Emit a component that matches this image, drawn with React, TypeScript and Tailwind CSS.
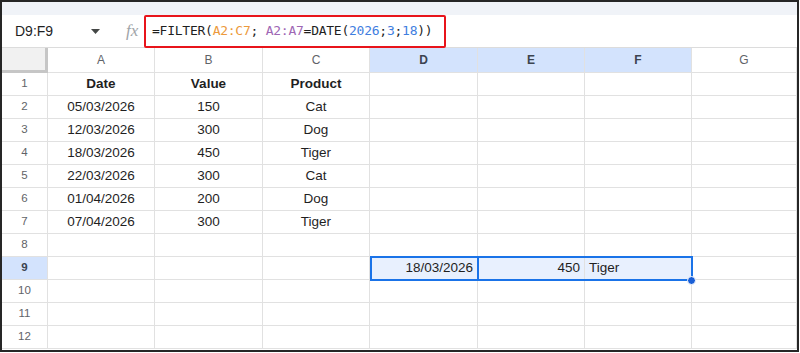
const cols = ["A", "B", "C", "D", "E", "F", "G"];
const colWidths = ["w-[107px]", "w-[108px]", "w-[107px]", "w-[108px]", "w-[107px]", "w-[107px]", "flex-1"];

const data: string[][] = [
  ["Date", "Value", "Product"],
  ["05/03/2026", "150", "Cat"],
  ["12/03/2026", "300", "Dog"],
  ["18/03/2026", "450", "Tiger"],
  ["22/03/2026", "300", "Cat"],
  ["01/04/2026", "200", "Dog"],
  ["07/04/2026", "300", "Tiger"],
];

const Formula = () => (
  <span className="font-['DejaVu_Sans_Mono',monospace] text-[13px] tracking-[-0.25px] text-[#1f1f1f]">
    =FILTER(<span className="text-[#ec9a3c]">A2:C7</span>; <span className="text-[#9e66b4]">A2:A7</span>=DATE(
    <span className="text-[#3f7ee0]">2026</span>;<span className="text-[#3f7ee0]">3</span>;
    <span className="text-[#3f7ee0]">18</span>))
  </span>
);

export default function App() {
  return (
    <div className="w-[800px] h-[353px] bg-white font-['Liberation_Sans',Arial,sans-serif]">
      <div className="w-[799px] h-[352px] border-2 border-[#262626] flex flex-col overflow-hidden">
        {/* toolbar remnant */}
        <div className="h-[13px] bg-[#f0f3f8]" />

        {/* formula bar */}
        <div className="h-[33px] flex items-center border-b border-[#dcdcdc]">
          <div className="w-[110px] flex items-center pl-[13px] pr-[12px] justify-between">
            <span className="text-[14px] text-[#1f1f1f]">D9:F9</span>
            <svg width="9" height="5" viewBox="0 0 9 5">
              <path d="M0 0h9L4.5 5z" fill="#444746" />
            </svg>
          </div>
          <span className="w-[32px] pl-[14px] font-['Liberation_Serif',serif] italic text-[17px] text-[#a0a4a8]">fx</span>
          <div className="w-[302px] h-[33px] border-2 border-[#e8141b] rounded-[2px] flex items-center pl-[6px] whitespace-pre">
            <Formula />
          </div>
        </div>

        {/* grid */}
        <div className="relative flex-1 flex flex-col text-[13.5px] text-[#1f1f1f]">
          <div className="h-[25px] flex">
            <div className="w-[46px] bg-[#f1f1f1] border-r-[3px] border-b-[3px] border-[#c6c6c6]" />
            {cols.map((c, i) => {
              const sel = c === "D" || c === "E" || c === "F";
              return (
                <div
                  key={c}
                  className={`${colWidths[i]} flex items-center justify-center border-r border-b border-[#e1e1e1] text-[12px] ${
                    sel ? "bg-[#d3e3fd] font-bold text-[#3c4450]" : "text-[#5f6368]"
                  }`}
                >
                  {c}
                </div>
              );
            })}
          </div>

          {Array.from({ length: 12 }, (_, r) => {
            const row = data[r];
            const isSel = r === 8;
            return (
              <div key={r} className="h-[23px] flex shrink-0">
                <div
                  className={`w-[46px] flex items-center justify-center border-r border-b border-[#e1e1e1] text-[11.5px] ${
                    isSel ? "bg-[#d3e3fd] font-bold text-[#3c4450]" : "text-[#5f6368]"
                  }`}
                >
                  {r + 1}
                </div>
                {cols.map((c, i) => {
                  let text = row ? row[i] ?? "" : "";
                  let align = "justify-center";
                  let bg = "";
                  if (isSel && i >= 3 && i <= 5) {
                    bg = "bg-[#e8f0fe]";
                    if (i === 3) {
                      text = "18/03/2026";
                      align = "justify-end pr-[4px]";
                    }
                    if (i === 4) {
                      text = "450";
                      align = "justify-end pr-[4px]";
                    }
                    if (i === 5) {
                      text = "Tiger";
                      align = "justify-start pl-[4px]";
                    }
                  }
                  return (
                    <div
                      key={c}
                      className={`${colWidths[i]} flex items-center ${align} ${bg} border-r border-b border-[#e1e1e1] ${
                        r === 0 ? "font-bold" : ""
                      }`}
                    >
                      {text}
                    </div>
                  );
                })}
              </div>
            );
          })}

          {/* selection range D9:F9 */}
          <div className="absolute left-[368px] top-[208px] w-[323px] h-[25px] border-2 border-[#1a73e8] pointer-events-none" />
          <div className="absolute left-[368px] top-[208px] w-[109px] h-[25px] border-2 border-[#1a73e8] pointer-events-none" />
          <div className="absolute left-[685px] top-[228px] w-[9px] h-[9px] rounded-full bg-[#1a5fd6] border border-white" />
        </div>
      </div>
    </div>
  );
}
